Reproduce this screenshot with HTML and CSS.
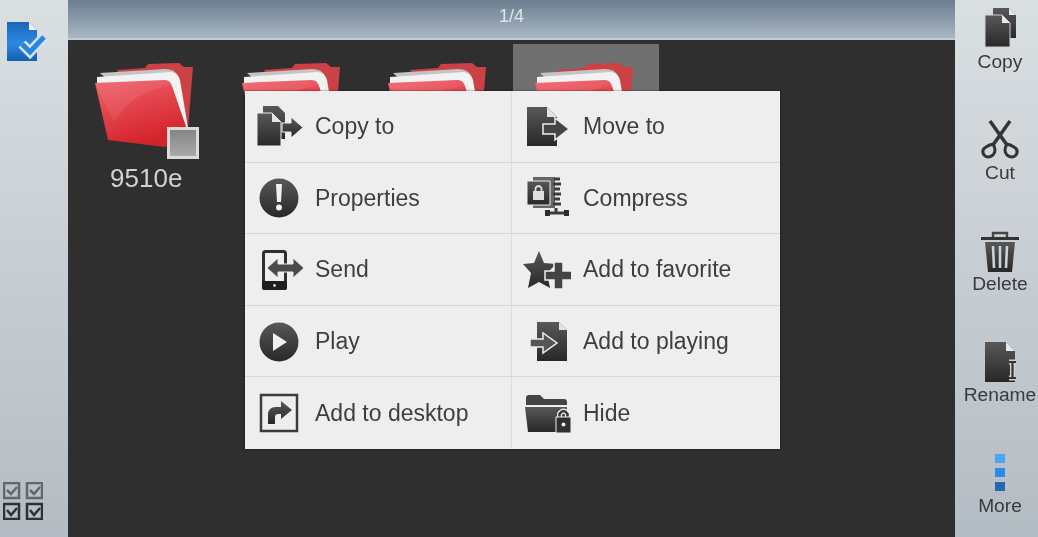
FILE: index.html
```html
<!DOCTYPE html>
<html>
<head>
    <title>File Manager</title>
    <link rel="stylesheet" href="styles.css">
</head>
<body>
    <svg class="svg-defs">
        <defs>
            <linearGradient id="dark" x1="0" y1="0" x2="0" y2="1">
                <stop offset="0" stop-color="#585858"/>
                <stop offset="1" stop-color="#282828"/>
            </linearGradient>
            <linearGradient id="blue" x1="0" y1="0" x2="0" y2="1">
                <stop offset="0" stop-color="#1a66b8"/>
                <stop offset="0.55" stop-color="#2b8ae2"/>
                <stop offset="1" stop-color="#155fae"/>
            </linearGradient>
            <linearGradient id="red" x1="0" y1="0" x2="0.4" y2="1">
                <stop offset="0" stop-color="#f0626b"/>
                <stop offset="1" stop-color="#d4222a"/>
            </linearGradient>
            <symbol id="folder" viewBox="0 0 100 85">
                <path d="M22 8L50 6 53 2 84 1 89 5H98L93 66 50 60Z" fill="#cb4146"/>
                <path d="M5 11L70 7Q80 7 83 14L92 65 60 60Z" fill="#c4c4c4"/>
                <path d="M2 15L76 10Q83 11 85 18L93 66 75 70 2 30Z" fill="#f2f2f2"/>
                <path d="M0 21L70 18Q75 18 77 24L93 70 70 85 13 78Z" fill="url(#red)"/>
                <path d="M0 21L70 18Q75 18 76 24Q38 28 19 60Z" fill="#fff" opacity="0.08"/>
            </symbol>
        </defs>
    </svg>

    <div class="app">
        <aside class="left-bar">
            <svg class="select-icon" width="42" height="42" viewBox="0 0 42 42">
                <path d="M0 0H22L30 8V39H0Z" fill="url(#blue)"/>
                <path d="M22 0L30 8H22Z" fill="#f1f4f7"/>
                <path d="M15 22L23 30 37 15" fill="none" stroke="#d3e3f1" stroke-width="10"/>
                <path d="M15 22L23 30 37 15" fill="none" stroke="#2a86dd" stroke-width="5"/>
            </svg>
            <svg class="select-all" width="40" height="38" viewBox="0 0 40 38">
                <g fill="#b9c0c6" stroke="#60686f" stroke-width="2.500">
                    <rect x="1" y="1" width="15" height="15"/>
                    <rect x="24" y="1" width="15" height="15"/>
                    <path d="M4 8L8 12 14 5M27 8L31 12 37 5" fill="none"/>
                </g>
                <g fill="#b9c0c6" stroke="#2f3234" stroke-width="2.500">
                    <rect x="1" y="22" width="15" height="15"/>
                    <rect x="24" y="22" width="15" height="15"/>
                    <path d="M4 28L8 33 14 26M27 28L31 33 37 26" fill="none"/>
                </g>
            </svg>
        </aside>

        <main class="content">
            <header class="page-bar">1/4</header>
            <div class="file-grid">
                <div class="file-item">
                    <svg class="folder" width="100" height="85"><use href="#folder"/></svg>
                    <span class="check-badge"></span>
                    <div class="file-name">9510e</div>
                </div>
                <div class="file-item">
                    <svg class="folder" width="100" height="85"><use href="#folder"/></svg>
                </div>
                <div class="file-item">
                    <svg class="folder" width="100" height="85"><use href="#folder"/></svg>
                </div>
                <div class="file-item selected">
                    <svg class="folder" width="100" height="85"><use href="#folder"/></svg>
                </div>
            </div>

            <div class="popup-menu">
                <div class="menu-item">
                    <svg class="menu-icon" viewBox="0 0 48 48">
                        <path d="M7 3H22L29 10V36H7Z" fill="url(#dark)"/>
                        <path d="M1 10H16L25 19V43H1Z" fill="url(#dark)" stroke="#eee" stroke-width="1"/>
                        <path d="M16 10L25 19H16Z" fill="#e4e4e4"/>
                        <path d="M26 20H35V14L47 24.500 35 35V29H26Z" fill="url(#dark)" stroke="#eee" stroke-width="1"/>
                    </svg>
                    <span>Copy to</span>
                </div>
                <div class="menu-item">
                    <svg class="menu-icon" viewBox="0 0 48 48">
                        <path d="M4 4H24L34 14V43H4Z" fill="url(#dark)"/>
                        <path d="M24 4L34 14H24Z" fill="#e4e4e4"/>
                        <path d="M20 21H32V15L46 26 32 37V31H20Z" fill="#444" stroke="#eee" stroke-width="1.500"/>
                    </svg>
                    <span>Move to</span>
                </div>
                <div class="menu-item">
                    <svg class="menu-icon" viewBox="0 0 48 48">
                        <circle cx="23" cy="24" r="19.500" fill="url(#dark)"/>
                        <path d="M20 10H26L25 28H21Z" fill="#f0f0f0"/>
                        <circle cx="23" cy="33.500" r="3" fill="#f0f0f0"/>
                    </svg>
                    <span>Properties</span>
                </div>
                <div class="menu-item">
                    <svg class="menu-icon" viewBox="0 0 48 48">
                        <path d="M10 3H32V34H10Z" fill="#666"/>
                        <path d="M4 7H27V31H4Z" fill="url(#dark)" stroke="#eee" stroke-width="1"/>
                        <rect x="10" y="17" width="11" height="9" fill="#ddd"/>
                        <path d="M12.500 17V14Q15.500 10 18.500 14V17" fill="none" stroke="#ddd" stroke-width="1.800"/>
                        <path d="M31 5H37M30 10H38M31 15H37M30 20H38M31 25H37M30 30H38M33 34V39M24 39H45" fill="none" stroke="#3c3c3c" stroke-width="3"/>
                        <path d="M22 36H27V42H22ZM41 36H46V42H41Z" fill="#2c2c2c"/>
                    </svg>
                    <span>Compress</span>
                </div>
                <div class="menu-item">
                    <svg class="menu-icon" viewBox="0 0 48 48">
                        <rect x="7.500" y="5.500" width="22" height="37" rx="2" fill="none" stroke="#2e2e2e" stroke-width="3"/>
                        <path d="M6 35H31V42Q31 44 29 44H8Q6 44 6 42Z" fill="#1f1f1f"/>
                        <circle cx="18.500" cy="39.500" r="1.400" fill="#ddd"/>
                        <path d="M11 22L22 12V18H37V12L48 22 37 32V26H22V32Z" fill="#4a4a4a" stroke="#eee" stroke-width="1"/>
                    </svg>
                    <span>Send</span>
                </div>
                <div class="menu-item">
                    <svg class="menu-icon" viewBox="0 0 48 48">
                        <path d="M16 5L21 17 33 18 24 27 27 42 16 36 5 42 8 27 0 18 11 17Z" fill="url(#dark)"/>
                        <path d="M31 16H40V25H49V34H40V43H31V34H22V25H31Z" fill="#444" stroke="#eee" stroke-width="1.500"/>
                    </svg>
                    <span>Add to favorite</span>
                </div>
                <div class="menu-item">
                    <svg class="menu-icon" viewBox="0 0 48 48">
                        <circle cx="23" cy="24" r="19.500" fill="url(#dark)"/>
                        <path d="M17 15L31 24 17 33Z" fill="#f0f0f0"/>
                    </svg>
                    <span>Play</span>
                </div>
                <div class="menu-item">
                    <svg class="menu-icon" viewBox="0 0 48 48">
                        <path d="M14 4H36L44 12V43H14Z" fill="url(#dark)"/>
                        <path d="M36 4L44 12H36Z" fill="#e4e4e4"/>
                        <path d="M7 21H20V15L34 25 20 35V29H7Z" fill="#555" stroke="#eee" stroke-width="1.500"/>
                    </svg>
                    <span>Add to playing</span>
                </div>
                <div class="menu-item">
                    <svg class="menu-icon" viewBox="0 0 48 48">
                        <rect x="5" y="5" width="36" height="36" fill="none" stroke="#3c3c3c" stroke-width="2.500"/>
                        <path d="M12 34V25Q12 17 20 17H25V11L36 20 25 29V24H22Q19 24 19 27V34Z" fill="url(#dark)"/>
                    </svg>
                    <span>Add to desktop</span>
                </div>
                <div class="menu-item">
                    <svg class="menu-icon" viewBox="0 0 48 48">
                        <path d="M3 8Q3 5 6 5H17L21 9H41Q44 9 44 12V15H3Z" fill="#444"/>
                        <path d="M2 17H44L42 42H5Z" fill="url(#dark)"/>
                        <path d="M36.500 27V24Q40.500 18 44.500 24V27" fill="none" stroke="#eee" stroke-width="5"/>
                        <path d="M36.500 27V24Q40.500 18 44.500 24V27" fill="none" stroke="#333" stroke-width="2.500"/>
                        <rect x="33" y="27" width="15" height="16" fill="#2f2f2f" stroke="#eee" stroke-width="1"/>
                        <circle cx="40.500" cy="34.500" r="2" fill="#eee"/>
                    </svg>
                    <span>Hide</span>
                </div>
            </div>
        </main>

        <aside class="right-bar">
            <div class="action">
                <svg class="action-icon" viewBox="0 0 40 40">
                    <path d="M13 1H29L36 8V31H13Z" fill="url(#dark)"/>
                    <path d="M29 1L36 8H29Z" fill="#e8e8e8"/>
                    <path d="M5 8H22L30 16V40H5Z" fill="url(#dark)" stroke="#ccd1d5" stroke-width="1"/>
                    <path d="M22 8L30 16H22Z" fill="#e8e8e8"/>
                </svg>
                <span>Copy</span>
            </div>
            <div class="action">
                <svg class="action-icon" viewBox="0 0 40 40">
                    <path d="M10 3L27 27M30 3L13 27" fill="none" stroke="#333" stroke-width="3.500"/>
                    <path d="M13 26Q17 33 13 37 8 41 4 37 1 32 6 29 9 27 13 26ZM27 26Q23 33 27 37 32 41 36 37 39 32 34 29 31 27 27 26Z" fill="none" stroke="#333" stroke-width="3"/>
                </svg>
                <span>Cut</span>
            </div>
            <div class="action">
                <svg class="action-icon" viewBox="0 0 40 40">
                    <path d="M13 8V4H27V8" fill="none" stroke="#444" stroke-width="2.400"/>
                    <path d="M1 9.500H39" stroke="#333" stroke-width="3"/>
                    <path d="M5 13H35L32 43H8Z" fill="url(#dark)"/>
                    <path d="M13 17L14 39M20 17V39M27 17L26 39" stroke="#ccd1d5" stroke-width="2.600"/>
                </svg>
                <span>Delete</span>
            </div>
            <div class="action">
                <svg class="action-icon" viewBox="0 0 40 40">
                    <path d="M5 2H26L35 11V42H5Z" fill="url(#dark)"/>
                    <path d="M26 2L35 11H26Z" fill="#e8e8e8"/>
                    <path d="M29 22H36M32.500 22V38M29 38H36" fill="none" stroke="#ccd1d5" stroke-width="5"/>
                    <path d="M29 22H36M32.500 22V38M29 38H36" fill="none" stroke="#333" stroke-width="2.200"/>
                </svg>
                <span>Rename</span>
            </div>
            <div class="action">
                <div class="more-icon">
                    <i class="dot-1"></i>
                    <i class="dot-2"></i>
                    <i class="dot-3"></i>
                </div>
                <span>More</span>
            </div>
        </aside>
    </div>
</body>
</html>
```

FILE: styles.css
```css
body {
    margin: 0;
    padding: 0;
    background-color: #2f2f2f;
    font-family: 'Liberation Sans', Arial, sans-serif;
    overflow: hidden;
}
.svg-defs {
    display: block;
    width: 0;
    height: 0;
}
.app {
    display: flex;
    width: 1038px;
    height: 537px;
    filter: blur(0.7px);
}
.left-bar,
.right-bar {
    background: linear-gradient(#dadfe2, #b4bcc3);
    box-sizing: border-box;
    flex: none;
    display: flex;
    flex-direction: column;
}
.left-bar {
    width: 68px;
    padding: 22px 0 17px 3px;
    justify-content: space-between;
}
.select-icon {
    margin-left: 4px;
}
.content {
    flex: 1;
    position: relative;
    background-color: #2f2f2f;
}
.page-bar {
    height: 40px;
    box-sizing: border-box;
    background: linear-gradient(#6b7d8f, #a9b7c3);
    border-bottom: 2px solid #c3ccd3;
    color: #dfe5e9;
    font-size: 18px;
    line-height: 33px;
    text-align: center;
}
.file-grid {
    display: grid;
    grid-template-columns: repeat(4, 146.5px);
    padding: 4px 0 0 5px;
}
.file-item {
    position: relative;
    height: 150px;
    padding-top: 18px;
    box-sizing: border-box;
    display: flex;
    flex-direction: column;
    align-items: center;
}
.file-item.selected {
    background-color: #707070;
}
.folder {
    flex: none;
    margin-right: 2px;
}
.file-name {
    margin-top: 16px;
    color: #d2d2d2;
    font-size: 26px;
    line-height: 30px;
}
.check-badge {
    position: absolute;
    left: 94px;
    top: 83px;
    width: 32px;
    height: 32px;
    box-sizing: border-box;
    border: 3px solid #dcdcdc;
    background: linear-gradient(#858585, #aaaaaa);
}
.popup-menu {
    position: absolute;
    left: 177px;
    top: 91px;
    width: 535px;
    height: 358px;
    display: grid;
    grid-template-columns: 267px 268px;
    grid-template-rows: repeat(5, 1fr);
    background-color: #eeeeee;
    box-shadow: 0 0 2px rgba(0, 0, 0, 0.6);
}
.menu-item {
    display: flex;
    align-items: center;
    gap: 11px;
    padding: 1px 0 0 11px;
    color: #3e3e3e;
    font-size: 23px;
    border-bottom: 1px solid #d6d6d6;
}
.menu-item:nth-child(odd) {
    border-right: 1px solid #dcdcdc;
}
.menu-item:nth-child(even) {
    gap: 12px;
}
.menu-item:nth-last-child(-n+2) {
    border-bottom: none;
}
.menu-icon {
    width: 48px;
    height: 48px;
    flex: none;
}
.right-bar {
    width: 83px;
    padding: 7px 0 20px 7px;
    justify-content: space-between;
    align-items: center;
}
.action {
    display: flex;
    flex-direction: column;
    align-items: center;
    gap: 4px;
    width: 76px;
    color: #3a3a3a;
    font-size: 19.2px;
    line-height: 22px;
}
.action-icon {
    width: 40px;
    height: 40px;
    overflow: visible;
}
.more-icon {
    width: 10px;
    height: 40px;
    box-sizing: border-box;
    padding-top: 3px;
    display: flex;
    flex-direction: column;
    gap: 4.5px;
}
.more-icon i {
    display: block;
    height: 10px;
}
.dot-1 {
    background-color: #4ba4f6;
}
.dot-2 {
    background-color: #2a8be8;
}
.dot-3 {
    background-color: #2568b0;
}
```
